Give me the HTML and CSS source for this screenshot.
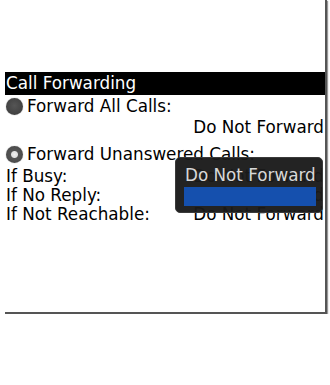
FILE: index.html
```html
<!DOCTYPE html>
<html lang="en">
<head>
  <meta charset="UTF-8">
  <meta name="viewport" content="width=device-width, initial-scale=1.0">
  <title>Call Forwarding</title>
  <link rel="stylesheet" href="styles.css">
</head>
<body>
  <div class="screen">
    <div class="title">Call Forwarding</div>
    <div class="option">
      <span class="radio"></span>
      <span>Forward All Calls:</span>
    </div>
    <div class="value">Do Not Forward</div>
    <div class="option option-second">
      <span class="radio radio-on"></span>
      <span>Forward Unanswered Calls:</span>
    </div>
    <div class="field"><span>If Busy:</span><span>Do Not Forward</span></div>
    <div class="field"><span>If No Reply:</span><span>Do Not Forward</span></div>
    <div class="field"><span>If Not Reachable:</span><span>Do Not Forward</span></div>

    <!-- choice popup for "If Busy" -->
    <div class="popup">
      <div class="popup-item">Do Not Forward</div>
      <div class="popup-sel"></div>
    </div>
  </div>
</body>
</html>
```

FILE: styles.css
```css
body {
  margin: 0;
  padding: 0;
  background-color: #fff;
  font-family: 'DejaVu Sans', sans-serif;
  font-size: 16.8px;
  color: #000;
}

.screen {
  position: relative;
  margin-left: 5px;
  width: 322px;
  height: 314px;
  padding-top: 72px;
  box-sizing: border-box;
  background: #fff;
  border-right: 2px solid #555;
  border-bottom: 2px solid #555;
  box-shadow: 1px 1px 1px #999;
}

.title {
  height: 23px;
  line-height: 23px;
  padding-left: 1px;
  background-color: #000;
  color: #fff;
}

.option {
  display: flex;
  align-items: center;
  height: 23px;
  line-height: 19px;
}

.option-second {
  margin-top: 4px;
  height: 26px;
}

.radio {
  width: 17px;
  height: 17px;
  margin: 0 4px 0 1px;
  border-radius: 50%;
  background: radial-gradient(circle at 50% 45%, #555 0, #444 60%, #3a3a3a 100%);
  box-shadow: 0 0 1px rgba(0, 0, 0, 0.5);
}

.radio-on {
  background: radial-gradient(circle, #f2f2f2 0, #e0e0e0 3px, #555 4px, #444 100%);
}

.value {
  height: 19px;
  line-height: 19px;
  text-align: right;
  padding-right: 1px;
}

.field {
  display: flex;
  justify-content: space-between;
  height: 19px;
  line-height: 19px;
  padding: 0 1px;
}

.popup {
  position: absolute;
  left: 170px;
  top: 157px;
  width: 148px;
  height: 56px;
  padding: 8px 6px 0 8px;
  box-sizing: border-box;
  background-color: rgba(26, 26, 26, 0.96);
  border: 1px solid #3a3a3a;
  border-radius: 5px;
}

.popup-item {
  height: 19px;
  line-height: 19px;
  padding-left: 1px;
  white-space: nowrap;
  color: #d8d8d8;
}

.popup-sel {
  height: 19px;
  margin-top: 2px;
  background-color: #1550ae;
}
```
